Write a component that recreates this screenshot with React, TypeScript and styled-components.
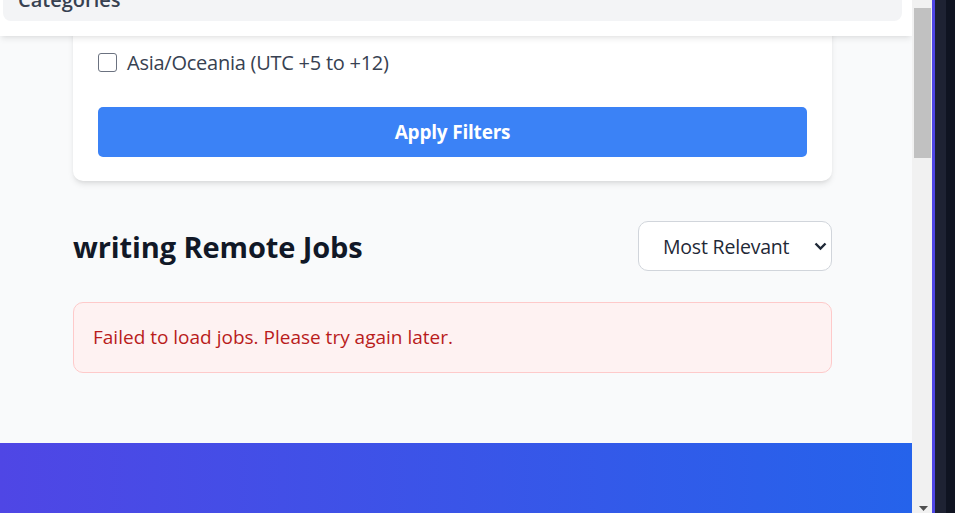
import React from "react";
import styled, { createGlobalStyle } from "styled-components";

const GlobalStyle = createGlobalStyle`
  html, body { margin: 0; padding: 0; overflow: hidden; }
  body { font-family: "Open Sans", "Noto Sans", sans-serif; background: #0f1321; }
  * { box-sizing: border-box; }
`;

const Screen = styled.div`
  display: grid;
  grid-template-columns: 912px 20px 23px;
  width: 955px;
  height: 513px;
  overflow: hidden;
`;

const Viewport = styled.div`
  position: relative;
  overflow: hidden;
  background: #f9fafb;
`;

const Overlay = styled.div`
  position: absolute;
  top: 0;
  left: 0;
  right: 0;
  height: 36px;
  background: #ffffff;
  box-shadow: 0 4px 6px -1px rgba(0, 0, 0, 0.08), 0 2px 4px -2px rgba(0, 0, 0, 0.06);
  padding: 0 10px 0 3px;
  z-index: 10;
`;

const CategoriesBox = styled.div`
  margin-top: -26px;
  background: #f3f4f6;
  border-radius: 8px;
  padding: 12px 15px 7px;
  font-size: 20px;
  line-height: 28px;
  font-weight: 600;
  color: #374151;
`;

const Content = styled.div`
  margin-top: -98px;
  padding: 0 80px 0 73px;
  display: flex;
  flex-direction: column;
`;

const Card = styled.section`
  background: #ffffff;
  border-radius: 10px;
  box-shadow: 0 4px 6px -1px rgba(0, 0, 0, 0.1), 0 2px 4px -2px rgba(0, 0, 0, 0.08);
  padding: 25px 25px 24px;
  display: flex;
  flex-direction: column;
`;

const GroupTitle = styled.div`
  font-size: 20px;
  line-height: 30px;
  font-weight: 600;
  color: #374151;
  margin-bottom: 10px;
`;

const OptionList = styled.div`
  display: flex;
  flex-direction: column;
  gap: 10px;
  margin-bottom: 30px;
`;

const OptionRow = styled.label`
  display: flex;
  align-items: center;
  gap: 10px;
  height: 30px;
  font-size: 20px;
  color: #374151;
  letter-spacing: -0.25px;
`;

const Box = styled.span`
  width: 19px;
  height: 19px;
  border: 1.5px solid #6b7280;
  border-radius: 3px;
  background: #fff;
  flex: none;
`;

const ApplyButton = styled.button`
  height: 50px;
  border: none;
  border-radius: 5px;
  background: #3b82f6;
  color: #ffffff;
  font-family: inherit;
  font-size: 19px;
  font-weight: 700;
  letter-spacing: -0.2px;
`;

const HeadRow = styled.div`
  margin-top: 40px;
  display: flex;
  align-items: center;
  justify-content: space-between;
  height: 50px;
`;

const Heading = styled.h2`
  margin: 0;
  font-size: 29px;
  font-weight: 700;
  color: #111827;
  letter-spacing: -0.1px;
`;

const SelectWrap = styled.div`
  position: relative;
  width: 194px;
  height: 50px;
`;

const Select = styled.select`
  appearance: none;
  width: 100%;
  height: 100%;
  border: 1px solid #d1d5db;
  border-radius: 10px;
  background: #ffffff;
  padding: 0 0 0 24px;
  font-family: inherit;
  font-size: 19.5px;
  color: #1f2937;
  letter-spacing: -0.2px;
`;

const Chevron = styled.svg`
  position: absolute;
  right: 5px;
  top: 21px;
  pointer-events: none;
`;

const ErrorBox = styled.div`
  margin-top: 31px;
  border: 1px solid #fecaca;
  background: #fef2f2;
  border-radius: 10px;
  padding: 20px 19px;
  font-size: 19px;
  line-height: 29px;
  color: #b91c1c;
`;

const Footer = styled.footer`
  margin-top: 70px;
  height: 200px;
  margin-left: -73px;
  margin-right: -80px;
  background: linear-gradient(to right, #4f46e5, #2563eb);
`;

const Track = styled.div`
  background: #f1f1f1;
  display: flex;
  flex-direction: column;
  align-items: stretch;
  padding: 8px 1px 2px 2px;
`;

const Thumb = styled.div`
  height: 150px;
  background: #c1c1c1;
`;

const ArrowDown = styled.svg`
  margin-top: auto;
  align-self: center;
  margin-left: 2px;
`;

const Edge = styled.div`
  display: grid;
  grid-template-columns: 3px 11px 9px;
`;

const Stripe = styled.div<{ $c: string }>`
  background: ${(p) => p.$c};
`;

const zones = [
  "Americas (UTC -10 to -3)",
  "Europe/Africa (UTC -2 to +4)",
  "Asia/Oceania (UTC +5 to +12)",
];

export default function App() {
  return (
    <>
      <GlobalStyle />
      <Screen>
        <Viewport>
          <Overlay>
            <CategoriesBox>Categories</CategoriesBox>
          </Overlay>
          <Content>
            <Card>
              <GroupTitle>Timezone</GroupTitle>
              <OptionList>
                {zones.map((z) => (
                  <OptionRow key={z}>
                    <Box />
                    {z}
                  </OptionRow>
                ))}
              </OptionList>
              <ApplyButton>Apply Filters</ApplyButton>
            </Card>
            <HeadRow>
              <Heading>writing Remote Jobs</Heading>
              <SelectWrap>
                <Select defaultValue="relevant">
                  <option value="relevant">Most Relevant</option>
                  <option value="newest">Newest</option>
                </Select>
                <Chevron width="13" height="9" viewBox="0 0 13 9">
                  <polyline points="1.5,1.5 6.5,6.5 11.5,1.5" fill="none" stroke="#1f2937" strokeWidth="2.4" />
                </Chevron>
              </SelectWrap>
            </HeadRow>
            <ErrorBox>Failed to load jobs. Please try again later.</ErrorBox>
            <Footer />
          </Content>
        </Viewport>
        <Track>
          <Thumb />
          <ArrowDown width="9" height="5" viewBox="0 0 9 5">
            <polygon points="0,0 9,0 4.5,5" fill="#505050" />
          </ArrowDown>
        </Track>
        <Edge>
          <Stripe $c="#4f46e5" />
          <Stripe $c="#1e2233" />
          <Stripe $c="#0f1321" />
        </Edge>
      </Screen>
    </>
  );
}
